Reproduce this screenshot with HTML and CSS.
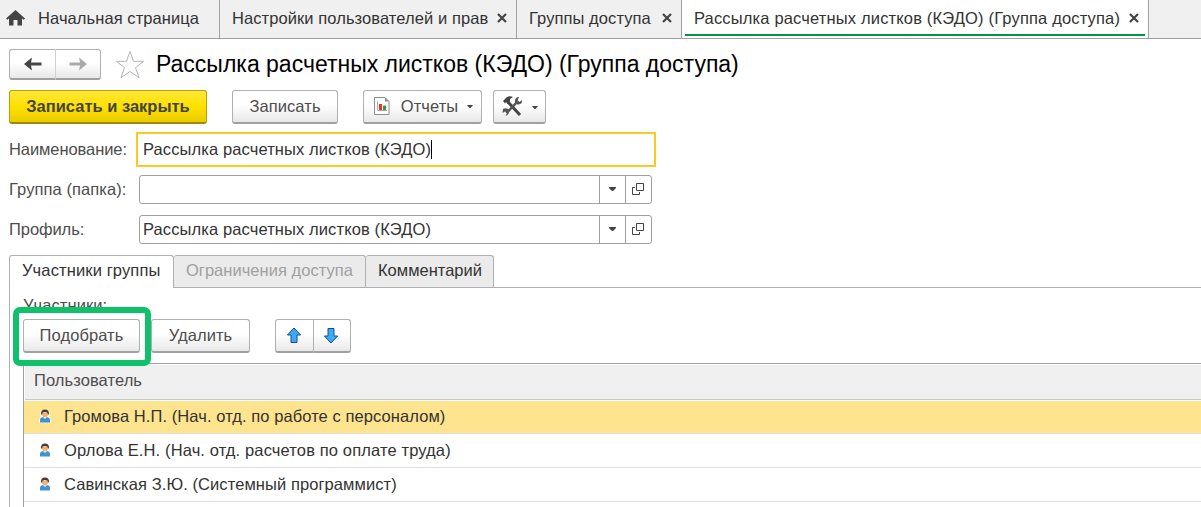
FILE: index.html
```html
<!DOCTYPE html>
<html lang="ru">
<head>
    <meta charset="UTF-8">
    <meta name="viewport" content="width=device-width, initial-scale=1.0">
    <title>Рассылка расчетных листков (КЭДО) (Группа доступа)</title>
    <link rel="stylesheet" href="styles.css">
</head>
<body>
    <svg class="sprite" aria-hidden="true">
        <symbol id="close" viewBox="0 0 10 10">
            <path d="M1 1l8 8M9 1l-8 8" stroke="#444" stroke-width="2.2"/>
        </symbol>
        <symbol id="caret" viewBox="0 0 7 4">
            <path d="M0 0h7v1L4 4H3L0 1z" fill="#444"/>
        </symbol>
        <symbol id="open" viewBox="0 0 12 12">
            <path d="M4.5 0.5h7v7h-7zM3 4.5H0.5v7h7V9" fill="none" stroke="#444"/>
        </symbol>
        <symbol id="arrow" viewBox="0 0 18 14">
            <path d="M0 7L8 0.5L7 5.500H17.5v3H7l1 5z"/>
        </symbol>
        <symbol id="move" viewBox="0 0 16 17">
            <path d="M8 1l6.6 7H11v7.5H5V8H1.4z" fill="#3fa9f5" stroke="#10508f" stroke-linejoin="round"/>
        </symbol>
        <symbol id="user" viewBox="0 0 12 14">
            <path class="halo" d="M1 13V11Q1 9 3 8Q1.500 6 2 3.500Q3 1 6 1T10 3.500Q10.500 6 9 8Q11 9 11 11V13z"/>
            <path d="M1 13.500V11Q1 8.500 4 8h4Q11 8.500 11 11v2.500z" fill="#3f93d2"/>
            <path d="M4 8h4L6 10z" fill="#fff"/>
            <path d="M3 3.500h6v2.500Q8 8.500 6 8.500T3 6z" fill="#f5b26b"/>
            <path d="M2 5.500Q1.600 0.500 6 0.500T10 5.500H9L8.300 3.500Q6 2.500 3.700 3.500L3 5.500z" fill="#493c36"/>
        </symbol>
    </svg>

    <nav class="windows">
        <div class="window home">
            <svg width="19" height="16" viewBox="0 0 19 16"><path d="M9.500 0L0 8.500l1.200 1.300L3 8.500V15.500h4.500V10h4v5.500H16V8.500l1.800 1.300L19 8.500z" fill="#444"/></svg>
            <span>Начальная страница</span>
        </div>
        <div class="window settings"><span>Настройки пользователей и прав</span><svg class="close"><use href="#close"/></svg></div>
        <div class="window groups"><span>Группы доступа</span><svg class="close"><use href="#close"/></svg></div>
        <div class="window current"><span>Рассылка расчетных листков (КЭДО) (Группа доступа)</span><svg class="close"><use href="#close"/></svg></div>
    </nav>

    <main>
        <header class="title">
            <div class="pair history">
                <button><svg class="arrow"><use href="#arrow"/></svg></button>
                <button disabled><svg class="arrow forward"><use href="#arrow"/></svg></button>
            </div>
            <svg class="star" width="30" height="29" viewBox="0 0 30 29"><path d="M15 1.500l3.500 9.800h10.200l-8.200 6.300 3.500 10.100L15 21.500l-9 6.200 3.500-10.100L1.300 11.300h10.200z" fill="#fff" stroke="#b3b3b3"/></svg>
            <h1>Рассылка расчетных листков (КЭДО) (Группа доступа)</h1>
        </header>

        <div class="commands">
            <button class="primary">Записать и закрыть</button>
            <button class="save">Записать</button>
            <button class="reports">
                <svg width="16" height="18" viewBox="0 0 16 18">
                    <path d="M0.500 0.500h10.500l4 4v13H0.500z" fill="#fff" stroke="#8c8c8c"/>
                    <path d="M11 0.500v4h4z" fill="#8c8c8c"/>
                    <path d="M3.500 4v9.500H13" fill="none" stroke="#aaa"/>
                    <path d="M5 7h3v6H5z" fill="#e8321e"/>
                    <path d="M9 8.500h3V13H9z" fill="#3d9140"/>
                </svg>
                <span>Отчеты</span>
                <svg class="caret"><use href="#caret"/></svg>
            </button>
            <button class="tools">
                <svg width="21" height="21" viewBox="0 0 21 21">
                    <path d="M6 6l12 13" stroke="#444" stroke-width="3"/>
                    <path d="M1 5l4-4q3-1.500 6 0L8 3v3L5.500 8 4 6 3 7.500z" fill="#444"/>
                    <path d="M4.500 17L16 5" stroke="#555" stroke-width="2.500"/>
                    <path d="M17 1q-4 0-4 4 0 4 3.500 3.500Q20.500 8 20 4l-2.500 2-2-1.500z" fill="#555"/>
                    <path d="M1 13q4-2 6 1 1 4-3.500 6l1.500-3-2-1.500L0.500 17z" fill="#555"/>
                </svg>
                <svg class="caret"><use href="#caret"/></svg>
            </button>
        </div>

        <div class="form">
            <label>Наименование:</label>
            <div class="field focused"><span>Рассылка расчетных листков (КЭДО)</span><i class="cursor"></i></div>
            <label class="folder">Группа (папка):</label>
            <div class="field">
                <span></span>
                <b><svg class="caret"><use href="#caret"/></svg></b>
                <b><svg class="open"><use href="#open"/></svg></b>
            </div>
            <label>Профиль:</label>
            <div class="field">
                <span>Рассылка расчетных листков (КЭДО)</span>
                <b><svg class="caret"><use href="#caret"/></svg></b>
                <b><svg class="open"><use href="#open"/></svg></b>
            </div>
        </div>

        <div class="tabs">
            <div class="tab active">Участники группы</div>
            <div class="tab disabled">Ограничения доступа</div>
            <div class="tab comment">Комментарий</div>
        </div>

        <section class="page">
            <div class="caption">Участники:</div>
            <div class="table-commands">
                <div class="marked"><button class="pick">Подобрать</button></div>
                <button class="delete">Удалить</button>
                <div class="pair order">
                    <button><svg class="move"><use href="#move"/></svg></button>
                    <button><svg class="move down"><use href="#move"/></svg></button>
                </div>
            </div>
            <div class="table">
                <div class="head">Пользователь</div>
                <div class="row selected"><svg class="user"><use href="#user"/></svg>Громова Н.П. (Нач. отд. по работе с персоналом)</div>
                <div class="row"><svg class="user"><use href="#user"/></svg><span class="wide">Орлова Е.Н. (Нач. отд. расчетов по оплате труда)</span></div>
                <div class="row"><svg class="user"><use href="#user"/></svg>Савинская З.Ю. (Системный программист)</div>
            </div>
        </section>
    </main>
</body>
</html>
```
FILE: styles.css
```css
*, *::after {
    box-sizing: border-box;
}
body {
    margin: 0;
    height: 507px;
    overflow: hidden;
    background: #fff;
    color: #333;
    font: 16.5px/20px "Liberation Sans", Arial, sans-serif;
    letter-spacing: 0.08px;
    white-space: nowrap;
}
svg {
    display: block;
    flex: none;
}
.sprite {
    position: absolute;
    width: 0;
    height: 0;
}
.windows {
    display: flex;
    height: 39px;
    background: #f0f0f0;
    border-bottom: 1px solid #a0a0a0;
}
.window {
    display: flex;
    align-items: center;
    justify-content: space-between;
    height: 38px;
    padding: 0 9px 2px 12px;
    border-right: 1px solid #a0a0a0;
}
.home {
    width: 220px;
    justify-content: flex-start;
    gap: 13px;
    padding-left: 6px;
}
.settings {
    width: 297px;
}
.groups {
    width: 165px;
}
.current {
    width: 467px;
    background: linear-gradient(#009646, #009646) 3px 34px / 460px 2px no-repeat #fff;
    letter-spacing: 0.16px;
}
.close {
    width: 10px;
    height: 10px;
}
.title {
    display: flex;
    align-items: center;
    height: 51px;
    padding: 0 0 1px 9px;
}
h1 {
    margin: 0 0 0 11px;
    color: #000;
    font-size: 23px;
    font-weight: normal;
    line-height: 28px;
    letter-spacing: 0;
}
button {
    display: flex;
    align-items: center;
    justify-content: center;
    height: 34px;
    padding: 0 0 1px;
    border: 1px solid #b0b0b0;
    border-bottom: 2px solid #a0a0a0;
    border-radius: 3px;
    background: linear-gradient(#fff 45%, #e8e8e8);
    color: #4d4d4d;
    font: inherit;
    letter-spacing: inherit;
}
.pair {
    display: flex;
}
.pair button:first-child {
    border-radius: 3px 0 0 3px;
}
.pair button:last-child {
    border-left: 0;
    border-radius: 0 3px 3px 0;
}
.history button {
    width: 45px;
    height: 31px;
    padding: 0;
}
.history button:first-child {
    width: 47px;
    border-right-color: #d0d0d0;
}
.arrow {
    width: 18px;
    height: 14px;
    fill: #444;
}
.forward {
    fill: #aaa;
    transform: scaleX(-1);
}
.star {
    margin-left: 14px;
}
.commands {
    display: flex;
    padding-left: 9px;
}
.primary {
    width: 198px;
    border-color: #b8a000;
    border-bottom-color: #a08a00;
    background: linear-gradient(#ffe838, #ffe100 50%, #eacb00);
    color: #444;
    font-weight: bold;
    letter-spacing: 0;
}
.save {
    width: 106px;
    margin-left: 25px;
}
.reports {
    width: 119px;
    margin-left: 25px;
    padding: 0 0 1px 2px;
}
.reports span {
    margin: 0 9px 0 11px;
}
.tools {
    width: 53px;
    margin-left: 11px;
    padding: 0;
    gap: 9px;
}
.caret {
    width: 7px;
    height: 4px;
}
.commands .caret {
    width: 6px;
    height: 3px;
    margin-top: 1px;
}
.form {
    display: grid;
    grid-template-columns: 130px 520px;
    grid-template-rows: 35px 37px 40px;
    align-items: end;
    padding: 8px 0 0 9px;
    margin-bottom: 11px;
}
.form label {
    height: 29px;
    padding-top: 4px;
    color: #4d4d4d;
    letter-spacing: -0.08px;
}
.form label:first-child {
    align-self: center;
}
.form .folder {
    letter-spacing: 0.08px;
}
.field {
    display: flex;
    width: 513px;
    height: 29px;
    border: 1px solid #a0a0a0;
    border-radius: 3px;
}
.field span {
    flex: 1;
    padding: 3px 0 0 3px;
    letter-spacing: 0.11px;
}
.field b {
    display: flex;
    align-items: center;
    justify-content: center;
    width: 26px;
    padding: 0 1px 1px 0;
    border-left: 1px solid #a0a0a0;
}
.focused {
    width: 520px;
    height: 35px;
    margin-left: -3px;
    border: 2px solid #f9ca24;
    border-radius: 0;
}
.focused span {
    flex: none;
    padding: 5px 0 0 5px;
}
.cursor {
    width: 1px;
    height: 19px;
    margin-top: 6px;
    background: #000;
}
.open {
    width: 12px;
    height: 12px;
}
.tabs {
    display: flex;
    height: 33px;
    margin-left: 9px;
    border-bottom: 1px solid #b0b0b0;
}
.tab {
    height: 32px;
    padding: 4px 0 0 12px;
    border: 1px solid #b0b0b0;
    border-bottom: 0;
    border-left: 0;
    border-radius: 3px 3px 0 0;
    background: #ebebeb;
}
.active {
    width: 165px;
    height: 33px;
    border-left: 1px solid #b0b0b0;
    background: #fff;
    letter-spacing: 0.13px;
}
.disabled {
    width: 192px;
    color: #a0a0a0;
    letter-spacing: 0.03px;
}
.comment {
    width: 128px;
    letter-spacing: 0;
}
.page {
    height: 240px;
    margin-left: 9px;
    padding: 7px 0 0 13px;
    border-left: 1px solid #b0b0b0;
}
.caption {
    height: 24px;
    color: #4d4d4d;
}
.table-commands {
    display: flex;
    height: 44px;
}
.marked {
    position: relative;
    margin-right: 11px;
}
.marked::after {
    content: "";
    position: absolute;
    top: -12px;
    left: -10px;
    width: 138px;
    height: 59px;
    border: 6px solid #0fc16a;
    border-radius: 7px;
}
.pick {
    width: 117px;
}
.delete {
    width: 99px;
}
.order {
    margin-left: 25px;
}
.order button {
    width: 37px;
    padding: 0 2px 0 0;
}
.order button:first-child {
    width: 39px;
}
.move {
    width: 16px;
    height: 17px;
}
.down {
    transform: scaleY(-1);
}
.table {
    height: 160px;
    border-top: 1px solid #a0a0a0;
    border-left: 1px solid #a0a0a0;
}
.head {
    height: 36px;
    margin-bottom: 1px;
    padding: 5px 0 0 9px;
    border: solid #fff;
    border-width: 1px 0 0 1px;
    background: #f0f0f0;
    box-shadow: inset 0 -1px #c8c8c8;
    color: #4d4d4d;
}
.row {
    display: flex;
    align-items: center;
    height: 34px;
    padding: 0 0 1px 15px;
    border-bottom: 1px solid #e0e0e0;
}
.wide {
    letter-spacing: 0.13px;
}
.selected {
    height: 33px;
    padding-bottom: 2px;
    background: #ffe48f;
}
.user {
    width: 12px;
    height: 14px;
    margin-right: 13px;
}
.halo {
    fill: #fff;
    stroke: #fff;
    stroke-width: 1.5px;
}
```
